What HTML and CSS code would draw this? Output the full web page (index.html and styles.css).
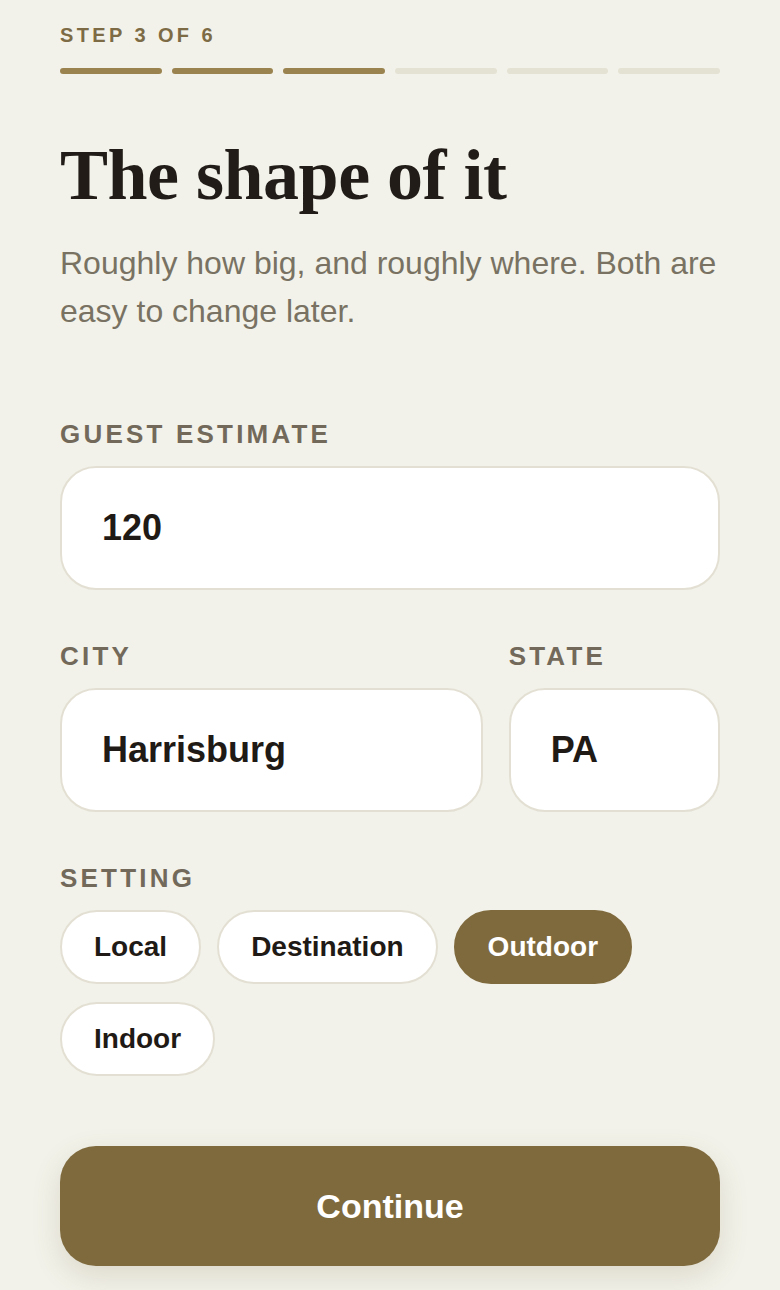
FILE: index.html
```html
<!DOCTYPE html>
<html lang="en">
<head>
    <meta charset="UTF-8">
    <meta name="viewport" content="width=device-width, initial-scale=1.0">
    <title>The shape of it</title>
    <link rel="stylesheet" href="styles.css">
</head>
<body>
    <div class="container">
        <div class="step">Step 3 of 6</div>
        <div class="progress">
            <span class="done"></span>
            <span class="done"></span>
            <span class="done"></span>
            <span></span>
            <span></span>
            <span></span>
        </div>

        <h1 class="title">The shape of it</h1>
        <p class="subtitle">Roughly how big, and roughly where. Both are easy to change later.</p>

        <div class="field first">
            <label class="label" for="guests">Guest estimate</label>
            <input class="input" type="text" id="guests" value="120">
        </div>

        <div class="row">
            <div class="field">
                <label class="label" for="city">City</label>
                <input class="input" type="text" id="city" value="Harrisburg">
            </div>
            <div class="field">
                <label class="label" for="state">State</label>
                <input class="input" type="text" id="state" value="PA">
            </div>
        </div>

        <div class="field">
            <div class="label">Setting</div>
            <div class="chips">
                <button class="chip">Local</button>
                <button class="chip">Destination</button>
                <button class="chip active">Outdoor</button>
                <button class="chip">Indoor</button>
            </div>
        </div>

        <button class="continue-btn">Continue</button>
    </div>
</body>
</html>
```

FILE: styles.css
```css
body {
    font-family: "Liberation Sans", Arial, sans-serif;
    margin: 0;
    background-color: #f2f2ea;
    color: #201b16;
}
.container {
    padding: 24px 60px 40px;
}
.step {
    font-size: 20px;
    font-weight: bold;
    letter-spacing: 3.4px;
    text-transform: uppercase;
    color: #7d6b45;
    line-height: 23px;
}
.progress {
    display: flex;
    gap: 10px;
    margin-top: 21px;
}
.progress span {
    flex: 1;
    height: 6px;
    border-radius: 3px;
    background-color: #e4e2d3;
}
.progress span.done {
    background-color: #9b8350;
}
.title {
    font-family: "Liberation Serif", "Times New Roman", serif;
    font-size: 72px;
    font-weight: bold;
    letter-spacing: -0.5px;
    line-height: 79px;
    margin: 62px 0 0;
    color: #211c17;
}
.subtitle {
    font-size: 32px;
    line-height: 48px;
    color: #797263;
    margin: 24px 0 0;
}
.field {
    margin-top: 51px;
    display: flex;
    flex-direction: column;
}
.field.first {
    margin-top: 84px;
}
.label {
    font-size: 26px;
    font-weight: bold;
    letter-spacing: 3.2px;
    text-transform: uppercase;
    color: #72695a;
    line-height: 30px;
    margin-bottom: 17px;
}
.input {
    width: 100%;
    height: 124px;
    box-sizing: border-box;
    padding: 0 40px;
    border: 2px solid #e3e0d3;
    border-radius: 36px;
    background-color: #ffffff;
    font-family: "Liberation Sans", Arial, sans-serif;
    font-size: 36px;
    font-weight: bold;
    color: #1f1a15;
    outline: none;
}
.row {
    display: grid;
    grid-template-columns: 2fr 1fr;
    gap: 26px;
}
.chips {
    display: flex;
    flex-wrap: wrap;
    gap: 18px 16px;
}
.chip {
    font-family: "Liberation Sans", Arial, sans-serif;
    font-size: 28px;
    font-weight: bold;
    line-height: 32px;
    padding: 19px 32px;
    border: 2px solid #e3e0d3;
    border-radius: 999px;
    background-color: #ffffff;
    color: #1f1a15;
    cursor: pointer;
}
.chip.active {
    background-color: #7f6a3d;
    border-color: #7f6a3d;
    color: #ffffff;
}
.continue-btn {
    display: block;
    width: 100%;
    height: 120px;
    margin-top: 70px;
    border: none;
    border-radius: 36px;
    background-color: #7f6a3d;
    color: #ffffff;
    font-family: "Liberation Sans", Arial, sans-serif;
    font-size: 34px;
    font-weight: bold;
    cursor: pointer;
    box-shadow: 0 10px 28px rgba(127, 106, 61, 0.18);
}
```
